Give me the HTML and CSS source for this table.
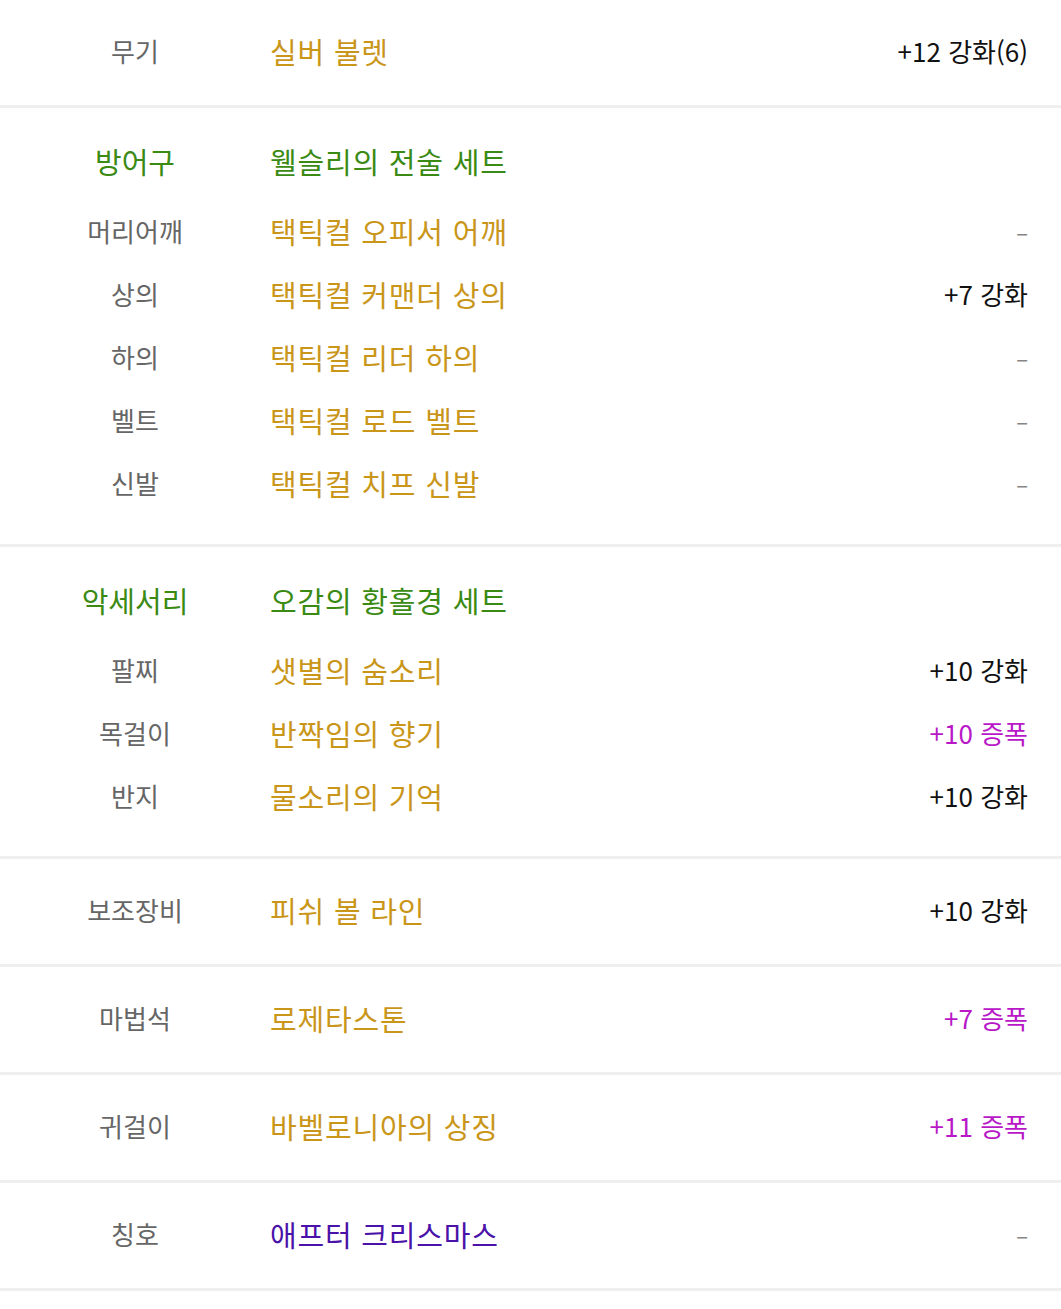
FILE: index.html
```html
<!DOCTYPE html>
<html lang="ko">
<head>
<meta charset="utf-8">
<title>장비</title>
<link rel="stylesheet" href="styles.css">
</head>
<body>
<div class="list">
  <section class="sec">
    <div class="row"><span class="lbl">무기</span><span class="name gold">실버 불렛</span><span class="val">+12 강화(6)</span></div>
  </section>
  <section class="sec multi">
    <div class="row head"><span class="lbl green">방어구</span><span class="name green">웰슬리의 전술 세트</span><span class="val"></span></div>
    <div class="row"><span class="lbl">머리어깨</span><span class="name gold">택틱컬 오피서 어깨</span><span class="val dash">–</span></div>
    <div class="row"><span class="lbl">상의</span><span class="name gold">택틱컬 커맨더 상의</span><span class="val">+7 강화</span></div>
    <div class="row"><span class="lbl">하의</span><span class="name gold">택틱컬 리더 하의</span><span class="val dash">–</span></div>
    <div class="row"><span class="lbl">벨트</span><span class="name gold">택틱컬 로드 벨트</span><span class="val dash">–</span></div>
    <div class="row"><span class="lbl">신발</span><span class="name gold">택틱컬 치프 신발</span><span class="val dash">–</span></div>
  </section>
  <section class="sec multi">
    <div class="row head"><span class="lbl green">악세서리</span><span class="name green">오감의 황홀경 세트</span><span class="val"></span></div>
    <div class="row"><span class="lbl">팔찌</span><span class="name gold">샛별의 숨소리</span><span class="val">+10 강화</span></div>
    <div class="row"><span class="lbl">목걸이</span><span class="name gold">반짝임의 향기</span><span class="val amp">+10 증폭</span></div>
    <div class="row"><span class="lbl">반지</span><span class="name gold">물소리의 기억</span><span class="val">+10 강화</span></div>
  </section>
  <section class="sec">
    <div class="row"><span class="lbl">보조장비</span><span class="name gold">피쉬 볼 라인</span><span class="val">+10 강화</span></div>
  </section>
  <section class="sec">
    <div class="row"><span class="lbl">마법석</span><span class="name gold">로제타스톤</span><span class="val amp">+7 증폭</span></div>
  </section>
  <section class="sec">
    <div class="row"><span class="lbl">귀걸이</span><span class="name gold">바벨로니아의 상징</span><span class="val amp">+11 증폭</span></div>
  </section>
  <section class="sec">
    <div class="row"><span class="lbl">칭호</span><span class="name purple">애프터 크리스마스</span><span class="val dash">–</span></div>
  </section>
</div>
</body>
</html>
```

FILE: styles.css
```css
html, body {
  margin: 0;
  padding: 0;
  background: #ffffff;
}
body {
  font-family: "Noto Sans CJK KR", "Noto Sans", sans-serif;
  width: 1061px;
}
.list {
  display: flex;
  flex-direction: column;
}
.sec {
  padding: 19px 0 23px;
  border-bottom: 3px solid #efefef;
  display: flex;
  flex-direction: column;
}
.sec.multi {
  padding: 21px 0 30px;
}
.sec.multi:nth-child(3) {
  padding-bottom: 29px;
}
.sec.multi .head {
  margin-bottom: 7px;
}
.row {
  display: grid;
  grid-template-columns: 270px 1fr auto;
  align-items: center;
  height: 63px;
  padding-right: 33px;
}
.lbl {
  text-align: center;
  font-size: 26px;
  color: #666666;
}
.lbl.green {
  font-size: 29px;
  color: #3a8a14;
}
.name {
  font-size: 29px;
  letter-spacing: 0.8px;
}
.gold { color: #c9961a; }
.green { color: #3a8a14; }
.purple { color: #4a12a8; }
.val {
  font-size: 26px;
  color: #111111;
  text-align: right;
}
.val.amp { color: #b818c8; }
.val.dash {
  color: #858585;
  font-size: 22px;
}
```
